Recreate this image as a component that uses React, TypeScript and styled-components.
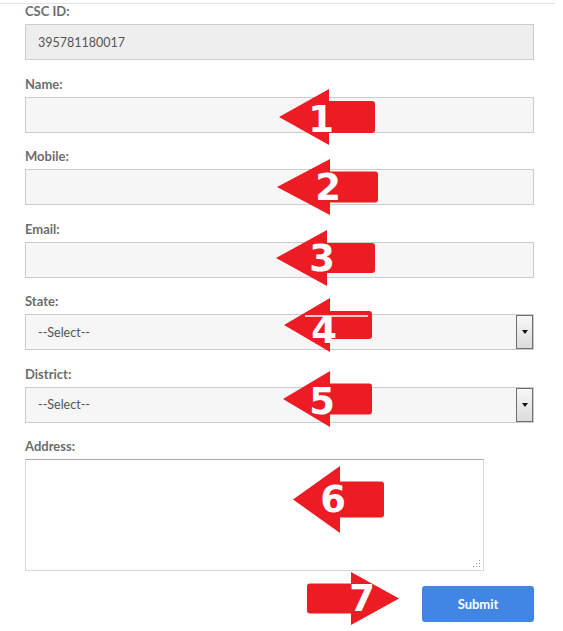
import styled, { createGlobalStyle } from 'styled-components';

const Global = createGlobalStyle`
  html, body {
    margin: 0;
    padding: 0;
    background: #fff;
  }
  body {
    font-family: Lato, "Liberation Sans", Arial, sans-serif;
  }
`;

const Page = styled.div`
  position: relative;
  width: 563px;
  height: 631px;
  padding-top: 3px;
  box-sizing: border-box;
  overflow: hidden;
`;

const Rule = styled.div`
  width: 555px;
  height: 1px;
  background: #e4e4e4;
`;

const Form = styled.form`
  display: flex;
  flex-direction: column;
  width: 509px;
  margin-left: 25px;
`;

const Group = styled.div`
  display: flex;
  flex-direction: column;
  margin-bottom: 16.5px;
`;

const Label = styled.label`
  font-size: 13px;
  line-height: 14px;
  font-weight: 700;
  color: #6d6d6d;
  margin-bottom: 6px;
`;

const Input = styled.input<{ $disabled?: boolean }>`
  box-sizing: border-box;
  height: 36px;
  width: 100%;
  margin: 0;
  padding: 0 12px;
  border: 1px solid #cccccc;
  border-radius: 0;
  background: ${(p) => (p.$disabled ? '#eeeeee' : '#f6f6f6')};
  font-family: Lato, "Liberation Sans", Arial, sans-serif;
  font-size: 12.5px;
  color: #555;
  outline: none;
`;

const SelectBox = styled.div`
  box-sizing: border-box;
  display: flex;
  align-items: stretch;
  height: 36px;
  border: 1px solid #cccccc;
  background: #f6f6f6;
`;

const SelectValue = styled.span`
  flex: 1;
  display: flex;
  align-items: center;
  padding-left: 12px;
  font-size: 12.5px;
  color: #555;
`;

const DropButton = styled.span`
  box-sizing: border-box;
  width: 17px;
  display: flex;
  align-items: center;
  justify-content: center;
  border: 1px solid #6f6f6f;
  background: linear-gradient(#f7f7f7, #dcdcdc);

  &::after {
    content: '';
    border-left: 3.5px solid transparent;
    border-right: 3.5px solid transparent;
    border-top: 4px solid #111;
  }
`;

const AddressBox = styled.div`
  box-sizing: border-box;
  width: 459px;
  height: 112px;
  display: flex;
  align-items: flex-end;
  justify-content: flex-end;
  padding: 0 2px 2px 0;
  border: 1px solid #d8d8d8;
  border-top-color: #a8a8a8;
  background: #fff;
`;

const Actions = styled.div`
  display: flex;
  justify-content: flex-end;
  margin-top: -1.5px;
`;

const SubmitButton = styled.button`
  width: 112px;
  height: 36px;
  border: none;
  border-radius: 3px;
  background: #4286e4;
  color: #fff;
  font-family: Lato, "Liberation Sans", Arial, sans-serif;
  font-weight: 700;
  font-size: 13px;
  cursor: pointer;
`;

const ArrowWrap = styled.div<{ $x: number; $y: number; $w: number; $h: number }>`
  position: absolute;
  left: ${(p) => p.$x}px;
  top: ${(p) => p.$y}px;
  width: ${(p) => p.$w}px;
  height: ${(p) => p.$h}px;
  pointer-events: none;
`;

const ArrowSvg = styled.svg<{ $flip?: boolean }>`
  display: block;
  transform: ${(p) => (p.$flip ? 'scaleX(-1)' : 'none')};
`;

const ArrowNumber = styled.span<{ $cx: number; $dy: number }>`
  position: absolute;
  left: ${(p) => p.$cx}px;
  top: 50%;
  transform: translate(-50%, calc(-50% + ${(p) => p.$dy}px));
  font-family: "DejaVu Sans", Verdana, sans-serif;
  font-weight: 700;
  font-size: 37px;
  line-height: 1;
  color: #fff;
`;

type ArrowSpec = {
  n: string;
  x: number;
  cy: number;
  w: number;
  hw: number;
  bh: number;
  h: number;
  cx: number;
  dy?: number;
  right?: boolean;
  streak?: [number, number, number];
};

const arrows: ArrowSpec[] = [
  { n: '1', x: 279, cy: 117, w: 96, hw: 50, bh: 32, h: 56, cx: 321, dy: 2 },
  { n: '2', x: 277, cy: 187, w: 101, hw: 53, bh: 31, h: 56, cx: 328 },
  { n: '3', x: 276, cy: 258, w: 99, hw: 51, bh: 30, h: 56, cx: 322 },
  { n: '4', x: 284, cy: 325, w: 88, hw: 46, bh: 28, h: 54, cx: 324, dy: 5, streak: [21, 84, 18] },
  { n: '5', x: 283, cy: 399, w: 89, hw: 47, bh: 31, h: 56, cx: 322, dy: 2 },
  { n: '6', x: 293, cy: 499, w: 91, hw: 47, bh: 36, h: 67, cx: 333 },
  { n: '7', x: 307, cy: 598, w: 92, hw: 48, bh: 30, h: 53, cx: 55, right: true },
];

function arrowPath(w: number, hw: number, bh: number, h: number) {
  const t = (h - bh) / 2;
  const b = (h + bh) / 2;
  const r = 3;
  return `M0 ${h / 2} L${hw} 0 L${hw} ${t} L${w - r} ${t} Q${w} ${t} ${w} ${t + r} L${w} ${b - r} Q${w} ${b} ${w - r} ${b} L${hw} ${b} L${hw} ${h} Z`;
}

const Arrow = ({ a }: { a: ArrowSpec }) => (
  <ArrowWrap $x={a.x} $y={a.cy - a.h / 2} $w={a.w} $h={a.h}>
    <ArrowSvg $flip={a.right} width={a.w} height={a.h} viewBox={`0 0 ${a.w} ${a.h}`}>
      <path d={arrowPath(a.w, a.hw, a.bh, a.h)} fill="#ed1c24" />
      {a.streak && (
        <line x1={a.streak[0]} x2={a.streak[1]} y1={a.streak[2]} y2={a.streak[2]} stroke="#fff" strokeWidth="1.5" />
      )}
    </ArrowSvg>
    <ArrowNumber $cx={a.right ? a.cx : a.cx - a.x} $dy={a.dy ?? 0}>
      {a.n}
    </ArrowNumber>
  </ArrowWrap>
);

const Grip = () => (
  <svg width="8" height="8" viewBox="0 0 8 8">
    <g fill="#9a9a9a">
      <rect x="6" y="0" width="1" height="1" />
      <rect x="3" y="3" width="1" height="1" />
      <rect x="6" y="3" width="1" height="1" />
      <rect x="0" y="6" width="1" height="1" />
      <rect x="3" y="6" width="1" height="1" />
      <rect x="6" y="6" width="1" height="1" />
    </g>
  </svg>
);

const App = () => {
  return (
    <>
      <Global />
      <Page>
        <Rule />
        <Form onSubmit={(e) => e.preventDefault()}>
          <Group>
            <Label>CSC ID:</Label>
            <Input $disabled readOnly value="395781180017" />
          </Group>
          <Group>
            <Label>Name:</Label>
            <Input />
          </Group>
          <Group>
            <Label>Mobile:</Label>
            <Input />
          </Group>
          <Group>
            <Label>Email:</Label>
            <Input />
          </Group>
          <Group>
            <Label>State:</Label>
            <SelectBox>
              <SelectValue>--Select--</SelectValue>
              <DropButton />
            </SelectBox>
          </Group>
          <Group>
            <Label>District:</Label>
            <SelectBox>
              <SelectValue>--Select--</SelectValue>
              <DropButton />
            </SelectBox>
          </Group>
          <Group>
            <Label>Address:</Label>
            <AddressBox>
              <Grip />
            </AddressBox>
          </Group>
          <Actions>
            <SubmitButton type="submit">Submit</SubmitButton>
          </Actions>
        </Form>
        {arrows.map((a) => (
          <Arrow key={a.n} a={a} />
        ))}
      </Page>
    </>
  );
};

export default App;
